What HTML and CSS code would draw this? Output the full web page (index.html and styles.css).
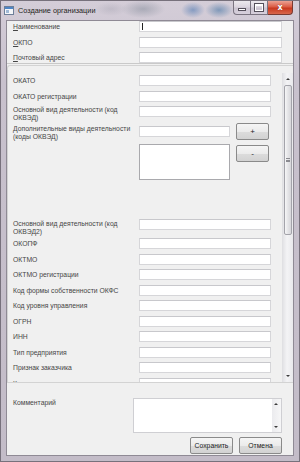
FILE: index.html
```html
<!DOCTYPE html>
<html lang="ru">
<head>
    <meta charset="utf-8">
    <title>Создание организации</title>
    <link rel="stylesheet" href="styles.css">
</head>
<body>

<div class="window">

    <div class="titlebar">
        <svg class="app-icon" width="10" height="9" viewBox="0 0 10 9">
            <rect x="0.5" y="0.5" width="9" height="8" fill="#f4f6f9" stroke="#6d7f99"/>
            <rect x="1" y="1" width="8" height="2" fill="#4f86c6"/>
            <rect x="2" y="4" width="3" height="3" fill="#9fb9d6"/>
        </svg>
        <span class="title">Создание организации</span>
        <div class="caption-buttons">
            <span class="cap-btn cap-min"><i></i></span>
            <span class="cap-btn cap-max"><i></i></span>
            <span class="cap-btn cap-close">x</span>
        </div>
    </div>

    <div class="client">

        <!-- main identification fields -->
        <div class="group-top">
            <div class="row"><label><u>Н</u>аименование</label><span class="field"><span class="caret"></span></span></div>
            <div class="row"><label><u>О</u>КПО</label><span class="field"></span></div>
            <div class="row last"><label><u>П</u>очтовый адрес</label><span class="field"></span></div>
        </div>

        <!-- classifier codes, scrollable -->
        <div class="panel">
            <div class="panel-body">
                <div class="row"><label>ОКАТО</label><span class="field"></span></div>
                <div class="row"><label>ОКАТО регистрации</label><span class="field"></span></div>
                <div class="row two-line r-okved"><label>Основной вид деятельности (код ОКВЭД)</label><span class="field"></span></div>
                <div class="row two-line r-extra"><label>Дополнительные виды деятельности (коды ОКВЭД)</label><span class="field"></span><button class="btn small">+</button></div>
                <div class="row r-list"><span></span><span class="listbox"></span><button class="btn small">-</button></div>
                <div class="row two-line r-okved2"><label>Основной вид деятельности (код ОКВЭД2)</label><span class="field"></span></div>
                <div class="row"><label>ОКОПФ</label><span class="field"></span></div>
                <div class="row"><label>ОКТМО</label><span class="field"></span></div>
                <div class="row"><label>ОКТМО регистрации</label><span class="field"></span></div>
                <div class="row"><label>Код формы собственности ОКФС</label><span class="field"></span></div>
                <div class="row"><label>Код уровня управления</label><span class="field"></span></div>
                <div class="row"><label>ОГРН</label><span class="field"></span></div>
                <div class="row"><label>ИНН</label><span class="field"></span></div>
                <div class="row"><label>Тип предприятия</label><span class="field"></span></div>
                <div class="row"><label>Признак заказчика</label><span class="field"></span></div>
                <div class="row"><label>Категория заказчика</label><span class="field"></span></div>
            </div>
            <div class="vscroll">
                <span class="sb-arrow up"></span>
                <span class="sb-thumb"><i></i></span>
                <span class="sb-track"></span>
                <span class="sb-arrow down"></span>
            </div>
        </div>

        <div class="comment-row">
            <label>Комментарий</label>
            <div class="memo">
                <div class="memo-scroll">
                    <span class="sb-arrow up"></span>
                    <span class="sb-arrow down"></span>
                </div>
            </div>
        </div>

        <div class="actions">
            <button class="btn">Сохранить</button>
            <button class="btn">Отмена</button>
        </div>

    </div>
</div>

</body>
</html>
```

FILE: styles.css
```css
body {
    margin: 0;
    font-family: "Liberation Sans", Arial, sans-serif;
    background: #c4bdca;
}

.window {
    width: 300px;
    height: 462px;
    box-sizing: border-box;
    border: 1px solid #77717c;
    background: linear-gradient(#d4cdd8, #c8c1cd 80px, #c3bcc8);
    display: flex;
    flex-direction: column;
    overflow: hidden;
}

/* title bar */
.titlebar {
    height: 19px;
    flex: none;
    display: flex;
    align-items: center;
    padding-left: 3px;
    background:
        radial-gradient(ellipse 22px 9px at 142px 8px, rgba(120,130,145,0.45), transparent),
        radial-gradient(ellipse 12px 8px at 192px 9px, rgba(70,115,175,0.55), transparent),
        radial-gradient(ellipse 14px 8px at 218px 9px, rgba(60,110,160,0.55), transparent),
        radial-gradient(ellipse 16px 7px at 110px 8px, rgba(150,150,165,0.3), transparent);
}

.app-icon {
    flex: none;
    margin-right: 4px;
    margin-top: -1px;
}

.title {
    font-size: 7.3px;
    color: #1f1f22;
    margin-top: -1px;
}

.caption-buttons {
    margin-left: auto;
    margin-right: 6px;
    align-self: flex-start;
    display: flex;
}

.cap-btn {
    height: 14px;
    box-sizing: border-box;
    border: 1px solid #7a7480;
    border-top: none;
    display: flex;
    align-items: center;
    justify-content: center;
    background: linear-gradient(rgba(255,255,255,0.55), rgba(235,230,238,0.35) 45%, rgba(190,182,198,0.35) 55%, rgba(220,214,226,0.5));
}

.cap-min {
    width: 17px;
    border-radius: 0 0 0 4px;
    border-right: none;
}
.cap-min i {
    width: 6px;
    height: 1px;
    margin-top: 4px;
    background: #fff;
    outline: 1px solid #55505b;
}

.cap-max {
    width: 18px;
}
.cap-max i {
    width: 6px;
    height: 4px;
    border: 1px solid #fff;
    border-top-width: 2px;
    outline: 1px solid #55505b;
}

.cap-close {
    width: 25px;
    border-left: none;
    border-color: #7a3a32;
    border-radius: 0 0 4px 0;
    background: linear-gradient(#eba293, #db5c45 45%, #c8391f 55%, #d8674d);
    color: #fff;
    font-family: "DejaVu Sans", sans-serif;
    font-weight: bold;
    font-size: 8px;
    line-height: 1;
    text-shadow: 0 0 1px #6a2a20;
}

/* client area */
.client {
    flex: 1;
    margin: 0 5px 5px;
    border: 1px solid #8f8a95;
    background: #f0f0f0;
    display: flex;
    flex-direction: column;
    font-size: 6.8px;
    color: #464646;
}

.row {
    display: grid;
    grid-template-columns: 126px 132px;
    height: 15.5px;
    align-items: start;
}

.row label {
    line-height: 11px;
    white-space: nowrap;
}

.field {
    display: block;
    height: 11px;
    box-sizing: border-box;
    background: #fff;
    border: 1px solid #d6d6d9;
    border-top-color: #c8c8cc;
    position: relative;
}

.caret {
    position: absolute;
    left: 2px;
    top: 1px;
    width: 1px;
    height: 7px;
    background: #222;
}

.group-top {
    padding: 0 11px 0 6px;
    border-bottom: 1px solid #c9c9c9;
    margin-bottom: 1px;
}
.group-top .row {
    grid-template-columns: 126px 143px;
}
.group-top .row.last {
    height: 11px;
}

/* scrollable classifier panel */
.panel {
    height: 318px;
    box-sizing: border-box;
    border: 1px solid #d3d3d3;
    border-right: none;
    border-radius: 3px 0 0 0;
    display: flex;
}

.panel-body {
    flex: 1;
    overflow: hidden;
    padding: 9px 12px 0 5px;
}

.row.two-line label {
    white-space: normal;
    line-height: 8px;
}

.r-okved {
    height: 17px;
}

.r-extra {
    height: 21px;
    grid-template-columns: 126px 91px 39px;
}
.r-extra label {
    margin-top: 2px;
}
.r-extra .field {
    margin-top: 3px;
}
.r-extra .btn,
.r-list .btn {
    margin-left: 6px;
}

.r-list {
    height: 75px;
    grid-template-columns: 126px 91px 39px;
}
.r-list .btn {
    margin-top: 1px;
}

.listbox {
    display: block;
    height: 34px;
    background: #fff;
    border: 1px solid #a9a9ad;
}

.r-okved2 {
    height: 19px;
}
.r-okved2 label {
    margin-top: 1px;
}

.vscroll {
    width: 10px;
    flex: none;
    margin: 7px 0 0;
    display: flex;
    flex-direction: column;
    background: linear-gradient(to right, #e3e3e6, #f3f3f5 40%, #e9e9ec);
    border-left: 1px solid #e0e0e3;
}

.sb-arrow {
    height: 12px;
    flex: none;
    position: relative;
}
.sb-arrow::after {
    content: "";
    position: absolute;
    left: 3px;
    top: 5px;
    border-left: 2px solid transparent;
    border-right: 2px solid transparent;
}
.sb-arrow.up::after {
    border-bottom: 2px solid #3c3c3c;
}
.sb-arrow.down::after {
    border-top: 2px solid #3c3c3c;
}

.sb-thumb {
    height: 150px;
    flex: none;
    box-sizing: border-box;
    margin: 0 1px;
    border: 1px solid #a3a3aa;
    border-radius: 2px;
    background: linear-gradient(to right, #f6f6f7, #e4e4e7 50%, #d6d6da);
    display: flex;
    align-items: center;
    justify-content: center;
}
.sb-thumb i {
    width: 4px;
    height: 4px;
    border-top: 1px solid #8a8a90;
    border-bottom: 1px solid #8a8a90;
    box-sizing: border-box;
    background: linear-gradient(transparent 1px, #8a8a90 1px, #8a8a90 2px, transparent 2px);
}

.sb-track {
    flex: 1;
}

/* comment */
.comment-row {
    display: grid;
    grid-template-columns: 120px 149px;
    padding-left: 6px;
    margin-top: 15px;
}
.comment-row label {
    line-height: 9px;
}

.memo {
    height: 35px;
    box-sizing: border-box;
    background: #fff;
    border: 1px solid #cfcfd3;
    display: flex;
    justify-content: flex-end;
}

.memo-scroll {
    width: 9px;
    display: flex;
    flex-direction: column;
    justify-content: space-between;
    background: linear-gradient(to right, #ebebee, #f6f6f7);
}
.memo-scroll .sb-arrow {
    height: 10px;
}
.memo-scroll .sb-arrow::after {
    left: 2px;
    top: 4px;
}

/* buttons */
.btn {
    height: 17px;
    box-sizing: border-box;
    padding: 0;
    font-family: inherit;
    font-size: 6.8px;
    color: #222;
    border: 1px solid #8a8a8a;
    border-radius: 2px;
    background: linear-gradient(#f5f5f5, #ebebeb 50%, #dcdcdc 51%, #d2d2d2);
}

.btn.small {
    font-size: 8px;
}

.actions {
    display: flex;
    justify-content: flex-end;
    gap: 6px;
    padding-right: 11px;
    margin-top: 4px;
}
.actions .btn {
    width: 43px;
}
```
